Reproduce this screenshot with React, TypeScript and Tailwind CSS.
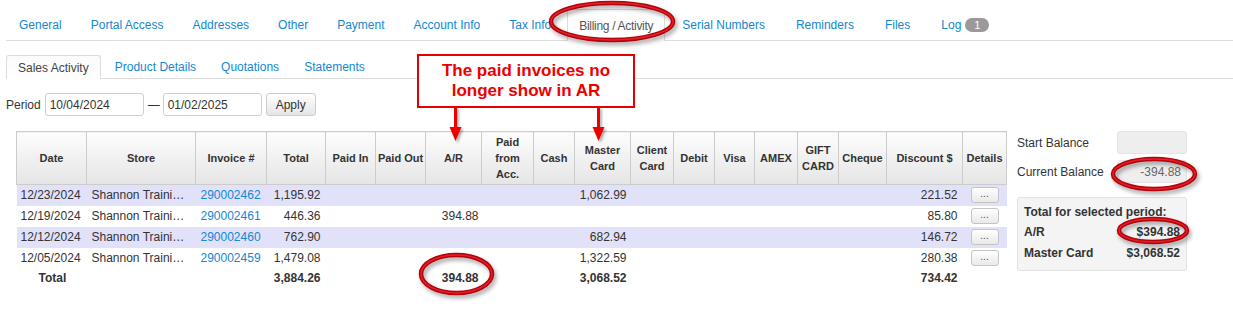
import React from 'react';

const navTabs = [
  'General',
  'Portal Access',
  'Addresses',
  'Other',
  'Payment',
  'Account Info',
  'Tax Info',
  'Billing / Activity',
  'Serial Numbers',
  'Reminders',
  'Files',
];

const subTabs = ['Sales Activity', 'Product Details', 'Quotations', 'Statements'];

const columns: { w: number; label: React.ReactNode }[] = [
  { w: 70, label: 'Date' },
  { w: 109, label: 'Store' },
  { w: 71, label: 'Invoice #' },
  { w: 59, label: 'Total' },
  { w: 50, label: 'Paid In' },
  { w: 50, label: 'Paid Out' },
  { w: 56, label: 'A/R' },
  { w: 52, label: <>Paid<br />from<br />Acc.</> },
  { w: 41, label: 'Cash' },
  { w: 56, label: <>Master<br />Card</> },
  { w: 43, label: <>Client<br />Card</> },
  { w: 41, label: 'Debit' },
  { w: 40, label: 'Visa' },
  { w: 43, label: 'AMEX' },
  { w: 41, label: <>GIFT<br />CARD</> },
  { w: 48, label: 'Cheque' },
  { w: 76, label: 'Discount $' },
  { w: 44, label: 'Details' },
];

const rows = [
  { date: '12/23/2024', inv: '290002462', total: '1,195.92', ar: '', mc: '1,062.99', disc: '221.52' },
  { date: '12/19/2024', inv: '290002461', total: '446.36', ar: '394.88', mc: '', disc: '85.80' },
  { date: '12/12/2024', inv: '290002460', total: '762.90', ar: '', mc: '682.94', disc: '146.72' },
  { date: '12/05/2024', inv: '290002459', total: '1,479.08', ar: '', mc: '1,322.59', disc: '280.38' },
];

function Ring({ x, y, w, h }: { x: number; y: number; w: number; h: number }) {
  return (
    <svg
      className="absolute pointer-events-none drop-shadow-[2px_3px_2px_rgba(0,0,0,0.35)]"
      style={{ left: x, top: y }}
      width={w}
      height={h}
    >
      <ellipse cx={w / 2} cy={h / 2} rx={w / 2 - 3} ry={h / 2 - 3} fill="none" stroke="#b8000a" strokeWidth="4.5" />
      <ellipse cx={w / 2} cy={h / 2} rx={w / 2 - 3} ry={h / 2 - 3} fill="none" stroke="#e0222a" strokeWidth="1.5" />
    </svg>
  );
}

function DetailsButton() {
  return (
    <div className="mx-auto w-[28px] h-[16px] rounded-[3px] border border-[#c4c4c4] bg-linear-to-b from-white to-[#e9e9e9] text-[10px] leading-[12px] text-center text-[#555]">
      ...
    </div>
  );
}

export default function App() {
  return (
    <div className="relative w-[1233px] h-[334px] overflow-hidden bg-white font-['Liberation_Sans',Arial,sans-serif] text-[12px] text-[#333]">
      {/* top tabs */}
      <div className="ml-[6px] pt-[9px] flex gap-[3px] border-b border-[#dedede]">
        {navTabs.map((t, i) => {
          const active = t === 'Billing / Activity';
          return (
            <div
              key={t}
              className={`h-[31px] flex items-center ${
                active
                  ? 'border border-b-0 border-[#dedede] bg-white -mb-px h-[32px] px-[11px] tracking-[-0.3px] text-[#555]'
                  : i > 7
                  ? 'px-[14px] text-[#1287d2]'
                  : 'px-[13px] text-[#1287d2]'
              }`}
            >
              {t}
            </div>
          );
        })}
        <div className="h-[31px] px-[14px] flex items-center text-[#1287d2]">
          Log
          <span className="ml-[4px] w-[24px] h-[14px] rounded-full bg-[#9a9a9a] text-white text-[11px] leading-[14px] text-center">1</span>
        </div>
      </div>

      {/* sub tabs */}
      <div className="ml-[6px] mt-[14px] flex gap-[3px] border-b border-[#dedede]">
        {subTabs.map((t, i) => (
          <div
            key={t}
            className={`h-[23px] px-[11px] flex items-center ${
              i === 0
                ? 'border border-b-0 border-[#dcdcdc] rounded-t-[3px] bg-linear-to-b from-[#fbfbfb] to-white -mb-px h-[24px] text-[#444]'
                : 'text-[#1287d2]'
            }`}
          >
            {t}
          </div>
        ))}
      </div>

      {/* period */}
      <div className="ml-[6px] mt-[14px] flex items-center gap-[4px] h-[23px]">
        <span>Period</span>
        <div className="w-[99px] h-[23px] border border-[#cfcfcf] rounded-[3px] pl-[4px] flex items-center">10/04/2024</div>
        <span className="w-[11px] text-center">—</span>
        <div className="w-[99px] h-[23px] border border-[#cfcfcf] rounded-[3px] pl-[4px] flex items-center">01/02/2025</div>
        <div className="w-[50px] h-[23px] border border-[#cccccc] rounded-[3px] bg-linear-to-b from-white to-[#e6e6e6] flex items-center justify-center">
          Apply
        </div>
      </div>

      {/* content */}
      <div className="mt-[15px] flex">
        <table className="ml-[16px] table-fixed border-collapse w-[990px]">
          <colgroup>
            {columns.map((c, i) => (
              <col key={i} style={{ width: c.w }} />
            ))}
          </colgroup>
          <thead>
            <tr className="h-[53px]">
              {columns.map((c, i) => (
                <th
                  key={i}
                  className="border border-[#cccccc] bg-linear-to-b from-[#fdfdfd] to-[#e5e5e5] font-bold text-[11px] leading-[16px] text-[#333] text-center px-0"
                >
                  {c.label}
                </th>
              ))}
            </tr>
          </thead>
          <tbody>
            {rows.map((r, i) => (
              <tr key={r.inv} className={`h-[21px] ${i % 2 === 0 ? 'bg-[#e1e1fa]' : 'bg-white'}`}>
                <td className="pl-[4px] whitespace-nowrap">{r.date}</td>
                <td className="pl-[5px]">
                  <div className="w-[97px] whitespace-nowrap overflow-hidden text-ellipsis">Shannon Training Store</div>
                </td>
                <td className="pl-[5px] text-[#1287d2]">{r.inv}</td>
                <td className="pr-[5px] text-right">{r.total}</td>
                <td />
                <td />
                <td className="pr-[3px] text-right">{r.ar}</td>
                <td />
                <td />
                <td className="pr-[4px] text-right">{r.mc}</td>
                <td />
                <td />
                <td />
                <td />
                <td />
                <td />
                <td className="pr-[5px] text-right">{r.disc}</td>
                <td>
                  <DetailsButton />
                </td>
              </tr>
            ))}
            <tr className="h-[18px] font-bold">
              <td colSpan={2} className="pl-[22px]">Total</td>
              <td />
              <td className="pr-[5px] text-right">3,884.26</td>
              <td />
              <td />
              <td className="pr-[3px] text-right">394.88</td>
              <td />
              <td />
              <td className="pr-[4px] text-right">3,068.52</td>
              <td />
              <td />
              <td />
              <td />
              <td />
              <td />
              <td className="pr-[5px] text-right">734.42</td>
              <td />
            </tr>
          </tbody>
        </table>

        {/* balance panel */}
        <div className="ml-[10px] w-[170px] flex flex-col">
          <div className="flex items-center justify-between h-[23px]">
            <span>Start Balance</span>
            <div className="w-[70px] h-[23px] rounded-[3px] bg-[#eeeeee] border border-[#e4e4e4]" />
          </div>
          <div className="mt-[6px] flex items-center justify-between h-[23px]">
            <span>Current Balance</span>
            <div className="w-[70px] h-[23px] rounded-[3px] bg-[#eeeeee] border border-[#e4e4e4] pr-[5px] flex items-center justify-end text-[#666]">
              -394.88
            </div>
          </div>
          <div className="mt-[14px] w-[170px] rounded-[3px] border border-[#e2e2e2] bg-[#f4f4f4] px-[6px] pt-[5px] pb-[6px] font-bold">
            <div className="leading-[19px]">Total for selected period:</div>
            <div className="flex justify-between leading-[21px]">
              <span>A/R</span>
              <span>$394.88</span>
            </div>
            <div className="flex justify-between leading-[21px]">
              <span>Master Card</span>
              <span>$3,068.52</span>
            </div>
          </div>
        </div>
      </div>

      {/* callout */}
      <div className="absolute left-[417px] top-[54px] w-[218px] h-[54px] border-2 border-[#e80000] bg-white flex flex-col items-center justify-center text-[#ee0000] font-bold text-[17px] leading-[20px]">
        <span>The paid invoices no</span>
        <span>longer show in AR</span>
      </div>
      <svg className="absolute left-[440px] top-[107px] drop-shadow-[2px_2px_1px_rgba(0,0,0,0.3)]" width="180" height="36">
        <line x1="15.5" y1="0" x2="15.5" y2="24" stroke="#ee0000" strokeWidth="3" />
        <polygon points="9.5,20 21.5,20 15.5,34" fill="#ee0000" />
        <line x1="158.5" y1="0" x2="158.5" y2="24" stroke="#ee0000" strokeWidth="3" />
        <polygon points="152.5,20 164.5,20 158.5,34" fill="#ee0000" />
      </svg>

      {/* rings */}
      <Ring x={548} y={0} w={128} h={43} />
      <Ring x={1110} y={156} w={88} h={36} />
      <Ring x={1116} y={216} w={74} h={29} />
      <Ring x={418} y={252} w={77} h={44} />
    </div>
  );
}
